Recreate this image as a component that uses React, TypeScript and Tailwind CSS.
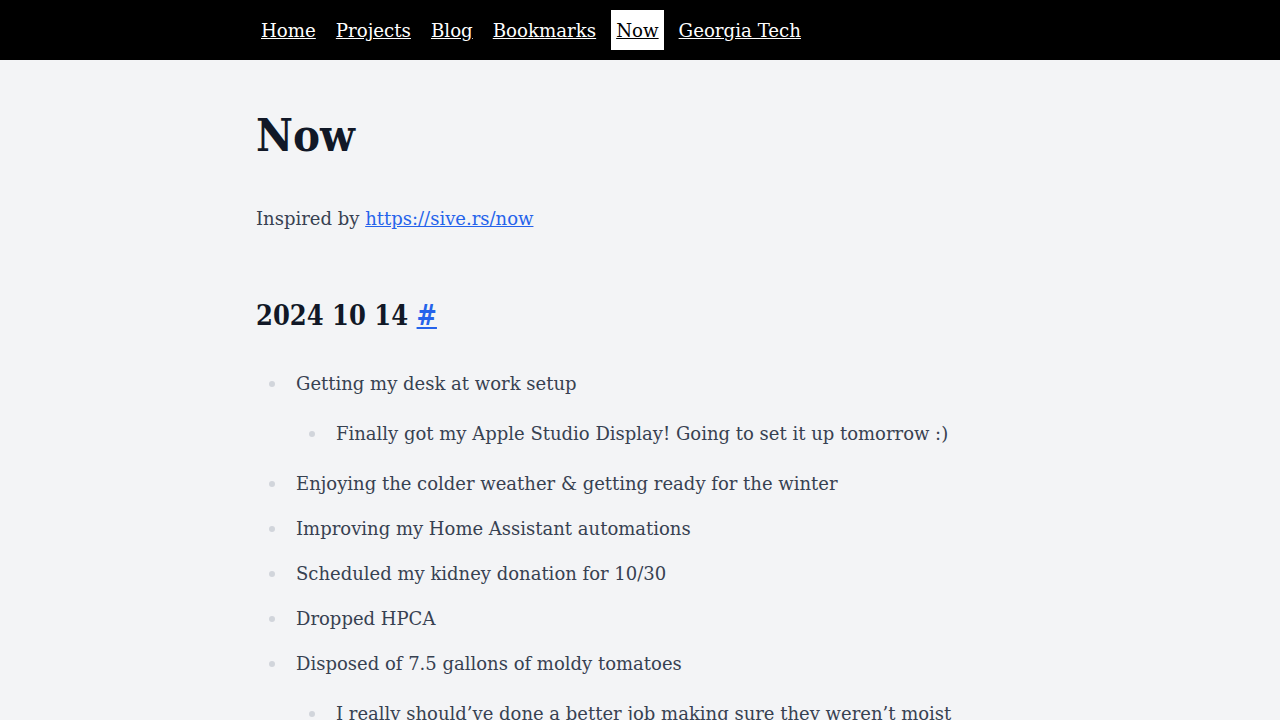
import type { ReactNode } from "react";

const links = ["Home", "Projects", "Blog", "Bookmarks", "Now", "Georgia Tech"];

type Item = { text: string; children?: string[] };

const items: Item[] = [
  {
    text: "Getting my desk at work setup",
    children: ["Finally got my Apple Studio Display! Going to set it up tomorrow :)"],
  },
  { text: "Enjoying the colder weather & getting ready for the winter" },
  { text: "Improving my Home Assistant automations" },
  { text: "Scheduled my kidney donation for 10/30" },
  { text: "Dropped HPCA" },
  {
    text: "Disposed of 7.5 gallons of moldy tomatoes",
    children: ["I really should\u2019ve done a better job making sure they weren\u2019t moist"],
  },
];

function Bullet({ children }: { children: ReactNode }) {
  return (
    <div className="flex items-start">
      <span className="flex h-[32px] w-[40px] shrink-0 items-center">
        <span className="ml-[13px] h-[6px] w-[6px] rounded-full bg-[#d1d5db]" />
      </span>
      <span className="whitespace-nowrap leading-[32px]">{children}</span>
    </div>
  );
}

export default function App() {
  return (
    <div
      className="min-h-screen bg-[#f3f4f6]"
      style={{ fontFamily: '"DejaVu Serif", "Liberation Serif", serif' }}
    >
      {/* top nav */}
      <nav className="flex h-[60px] items-center bg-black">
        <div className="mx-auto flex w-full max-w-3xl items-center gap-[10px]">
          {links.map((l) => (
            <a
              key={l}
              href="#"
              className={
                l === "Now"
                  ? "flex h-[40px] items-center bg-white px-[5px] pt-[2px] text-[18.2px] text-black underline"
                  : "flex h-[40px] items-center px-[5px] pt-[2px] text-[18.2px] text-white underline"
              }
            >
              {l}
            </a>
          ))}
        </div>
      </nav>

      <main className="mx-auto max-w-3xl text-[18px] text-[#374151]">
        <h1 className="mt-[52px] text-[45px] font-bold leading-[48px] text-[#111827] font-stretch-condensed">
          Now
        </h1>

        <p className="mt-[43px] leading-[32px]">
          Inspired by{" "}
          <a href="#" className="text-[#2563eb] underline">
            https://sive.rs/now
          </a>
        </p>

        <h2 className="mt-[61px] text-[27px] font-bold leading-[40px] text-[#111827] font-stretch-condensed">
          2024 10 14{" "}
          <a href="#" className="text-[#2563eb] underline">
            #
          </a>
        </h2>

        <ul className="mt-[32px] flex flex-col gap-[13px]">
          {items.map((it) => (
            <li key={it.text}>
              <Bullet>{it.text}</Bullet>
              {it.children && (
                <ul className="mb-[5px] mt-[18px] pl-[40px]">
                  {it.children.map((c) => (
                    <li key={c}>
                      <Bullet>{c}</Bullet>
                    </li>
                  ))}
                </ul>
              )}
            </li>
          ))}
        </ul>
      </main>
    </div>
  );
}
